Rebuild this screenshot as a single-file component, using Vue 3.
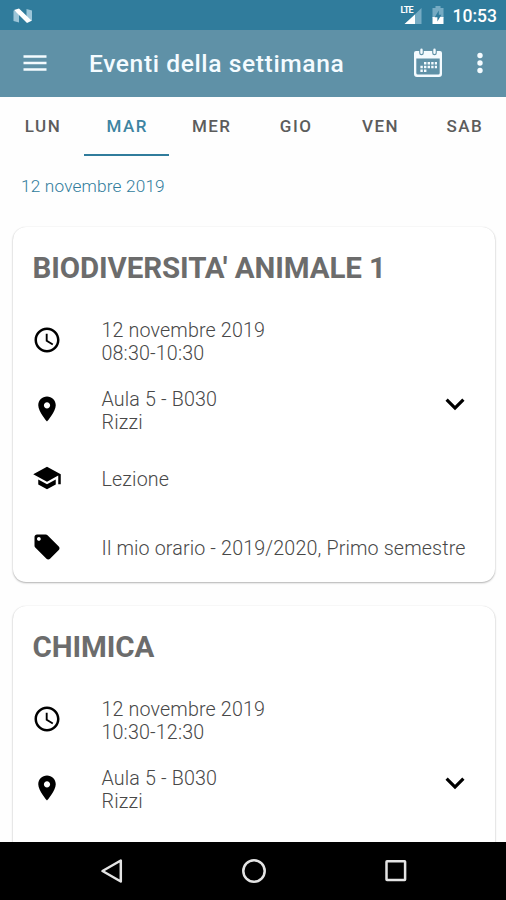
<script setup>
import { ref } from 'vue'

const days = ['LUN', 'MAR', 'MER', 'GIO', 'VEN', 'SAB']
const active = ref('MAR')

const icons = {
  clock: 'M11.99 2C6.47 2 2 6.48 2 12s4.47 10 9.99 10C17.52 22 22 17.52 22 12S17.52 2 11.99 2zM12 20c-4.42 0-8-3.58-8-8s3.58-8 8-8 8 3.58 8 8-3.58 8-8 8zm.5-13H11v6l5.25 3.15.75-1.23-4.5-2.67z',
  place: 'M12 2C8.13 2 5 5.13 5 9c0 5.25 7 13 7 13s7-7.75 7-13c0-3.87-3.13-7-7-7zm0 9.5c-1.38 0-2.5-1.12-2.5-2.5s1.12-2.5 2.5-2.5 2.5 1.12 2.5 2.5-1.12 2.5-2.5 2.5z',
  school: 'M5 13.18v4L12 21l7-3.82v-4L12 17l-7-3.82zM12 3L1 9l11 6 9-4.91V17h2V9L12 3z',
  tag: 'M21.41 11.58l-9-9C12.05 2.22 11.55 2 11 2H4c-1.1 0-2 .9-2 2v7c0 .55.22 1.05.59 1.42l9 9c.36.36.86.58 1.41.58.55 0 1.05-.22 1.41-.59l7-7c.37-.36.59-.86.59-1.41 0-.55-.23-1.06-.59-1.42zM5.5 7C4.67 7 4 6.33 4 5.5S4.67 4 5.5 4 7 4.67 7 5.5 6.33 7 5.5 7z',
}

const events = [
  {
    title: "BIODIVERSITA' ANIMALE 1",
    rows: [
      { icon: 'clock', lines: ['12 novembre 2019', '08:30-10:30'] },
      { icon: 'place', lines: ['Aula 5 - B030', 'Rizzi'], expand: true },
      { icon: 'school', lines: ['Lezione'] },
      { icon: 'tag', lines: ['Il mio orario - 2019/2020, Primo semestre'] },
    ],
  },
  {
    title: 'CHIMICA',
    rows: [
      { icon: 'clock', lines: ['12 novembre 2019', '10:30-12:30'] },
      { icon: 'place', lines: ['Aula 5 - B030', 'Rizzi'], expand: true },
    ],
  },
]
</script>

<template>
  <div class="screen">
    <div class="status">
      <svg class="logo" width="20" height="16" viewBox="0 0 20 16">
        <path d="M.5 2.500 6 5v9.500L.5 13z" fill="#9cc5d8" />
        <path d="M13.500 1 19 2.500V13l-5.500-2z" fill="#9cc5d8" />
        <path d="M1 2 6 .5 18.700 12.800 14 15z" fill="#fff" />
      </svg>
      <span class="signal">
        <svg width="22" height="19" viewBox="0 0 22 19">
          <path d="M21.500 2v16H5z" fill="#76abc3" />
          <path d="M15 8.500V18H4.500z" fill="#fff" />
        </svg>
        <span class="lte">LTE</span>
      </span>
      <svg class="battery" width="12" height="19" viewBox="0 0 12 19">
        <path d="M3.500 0h5v2H11.500v10H.5V2h3z" fill="#76abc3" />
        <path d="M.5 11h11v7H.5z" fill="#fff" />
        <path d="M6.800 4.500 2.700 11.200h2.700v4.300l4-6.700H6.800z" fill="#307c9c" />
      </svg>
      <span class="time">10:53</span>
    </div>

    <header class="toolbar">
      <svg class="menu" width="24" height="16" viewBox="0 0 24 16">
        <path d="M.5 1.500h23M.5 8h23M.5 14.500h23" stroke="#f4fbff" stroke-width="2.500" />
      </svg>
      <h1>Eventi della settimana</h1>
      <svg class="calendar" width="30" height="30" viewBox="0 0 30 30">
        <path fill="#f4fbff" fill-rule="evenodd" d="M3 3h24a2 2 0 0 1 2 2v21a3 3 0 0 1-3 3H4a3 3 0 0 1-3-3V5a2 2 0 0 1 2-2zM3.300 10.500V25a1.500 1.500 0 0 0 1.500 1.500h20.400a1.500 1.500 0 0 0 1.500-1.500V10.500z" />
        <path d="M8.500 2.500v2.500M21.500 2.500v2.500" stroke="#5f91a7" stroke-width="4.600" stroke-linecap="round" />
        <path d="M8.500 1.800v3M21.500 1.800v3" stroke="#f4fbff" stroke-width="2.400" stroke-linecap="round" />
        <path d="M11 15.200h13M7.400 19h16.600M7.400 22.800h6" stroke="#f4fbff" stroke-width="2.400" stroke-dasharray="2.400 1.200" />
      </svg>
      <svg class="more" width="6" height="22" viewBox="0 0 6 22">
        <circle cx="3" cy="3.500" r="2.700" /><circle cx="3" cy="11" r="2.700" /><circle cx="3" cy="18.500" r="2.700" />
      </svg>
    </header>

    <nav class="tabs">
      <button v-for="d in days" :key="d" :class="{ on: d === active }" @click="active = d"><span>{{ d }}</span></button>
    </nav>

    <main class="content">
      <p class="date">12 novembre 2019</p>
      <article v-for="e in events" :key="e.title" class="card">
        <h2>{{ e.title }}</h2>
        <div v-for="r in e.rows" :key="r.icon" class="row">
          <svg class="icon" width="30" height="30" viewBox="0 0 24 24"><path :d="icons[r.icon]" /></svg>
          <div class="text" :class="{ double: r.lines.length > 1 }"><div v-for="l in r.lines" :key="l">{{ l }}</div></div>
          <svg v-if="r.expand" class="chevron" width="38" height="38" viewBox="0 0 24 24"><path d="M7.410 8.590 12 13.170l4.590-4.580L18 10l-6 6-6-6z" /></svg>
        </div>
      </article>
    </main>

    <footer class="nav">
      <svg width="24" height="26" viewBox="0 0 24 26"><path d="M20.800 2.500v21L2.500 13z" /></svg>
      <svg width="26" height="26" viewBox="0 0 26 26"><circle cx="13" cy="13" r="10.700" /></svg>
      <svg width="24" height="26" viewBox="0 0 24 26"><rect x="2.500" y="3.300" width="18.600" height="18.800" rx=".5" /></svg>
    </footer>
  </div>
</template>

<style>
body { margin: 0; background: #fefefe; }
</style>

<style scoped>
.screen {
  width: 506px;
  height: 900px;
  display: flex;
  flex-direction: column;
  overflow: hidden;
  background: #fefefe;
  font-family: Roboto, "Liberation Sans", sans-serif;
}
.status {
  flex: none;
  height: 30px;
  display: flex;
  align-items: center;
  box-sizing: border-box;
  padding: 1px 9px 0 13px;
  background: #307c9c;
  color: #fff;
}
.logo { margin-right: auto; }
.signal { position: relative; width: 22px; height: 19px; margin-right: 10px; }
.signal svg { display: block; }
.lte { position: absolute; left: 1px; top: 0; font-size: 9px; line-height: 9px; font-weight: 700; letter-spacing: -0.8px; }
.battery { margin-right: 9px; }
.time { font-size: 17.500px; font-weight: 500; line-height: 20px; }
.toolbar {
  flex: none;
  height: 66.500px;
  display: flex;
  align-items: center;
  box-sizing: border-box;
  padding: 0 23px 0 23px;
  background: #5f91a7;
  color: #f4fbff;
}
.toolbar h1 {
  flex: 1;
  margin: 0 0 0 42px;
  font-size: 24.600px;
  line-height: 30px;
  font-weight: 500;
  letter-spacing: 0.600px;
  white-space: nowrap;
  padding-top: 2px;
}
.calendar { margin-right: 34px; }
.more { fill: #f4fbff; }
.tabs { flex: none; height: 59px; display: grid; grid-template-columns: repeat(6, 84.400px); }
.tabs button {
  border: 0;
  border-bottom: 2px solid transparent;
  background: none;
  padding: 2px 0 0 1.500px;
  font: 500 17px/20px Roboto, sans-serif;
  letter-spacing: 1.500px;
  color: #5c5c5c;
}
.tabs button.on { color: #3d84a2; border-color: #307c9c; }
.content { flex: 1; min-height: 0; overflow: hidden; padding: 0 11px 0 13px; }
.date {
  margin: 20px 0 30px 8px;
  font-size: 17.240px;
  line-height: 21px;
  font-weight: 300;
  letter-spacing: 0.160px;
  color: #307c9c;
}
.card {
  box-sizing: border-box;
  height: 355.500px;
  margin-bottom: 23.500px;
  border-radius: 13px;
  background: #fff;
  box-shadow: 0 1px 2px rgba(0, 0, 0, 0.3), 0 0 1px rgba(0, 0, 0, 0.12);
}
.card h2 {
  margin: 0;
  height: 79.500px;
  box-sizing: border-box;
  padding: 23px 0 0 19.500px;
  font-size: 29.500px;
  line-height: 36px;
  font-weight: 700;
  letter-spacing: -0.100px;
  color: #6c6c6c;
  white-space: nowrap;
}
.row { height: 69px; display: flex; align-items: center; padding: 0 21px 0 19px; }
.icon { flex: none; margin: 0 39.500px 1px 0; }
.text { flex: 1; padding-top: 1px; font-size: 19.700px; line-height: 23px; font-weight: 300; letter-spacing: 0.140px; color: #484848; white-space: nowrap; }
.text.double { padding-top: 2px; }
.chevron { flex: none; margin-bottom: 11px; }
.nav {
  flex: none;
  height: 58.500px;
  display: flex;
  align-items: center;
  justify-content: space-between;
  box-sizing: border-box;
  padding: 0 98px 0 100px;
  background: #000;
}
.nav svg { fill: none; stroke: #e4e4e4; stroke-width: 2.500; stroke-linejoin: round; }
</style>
